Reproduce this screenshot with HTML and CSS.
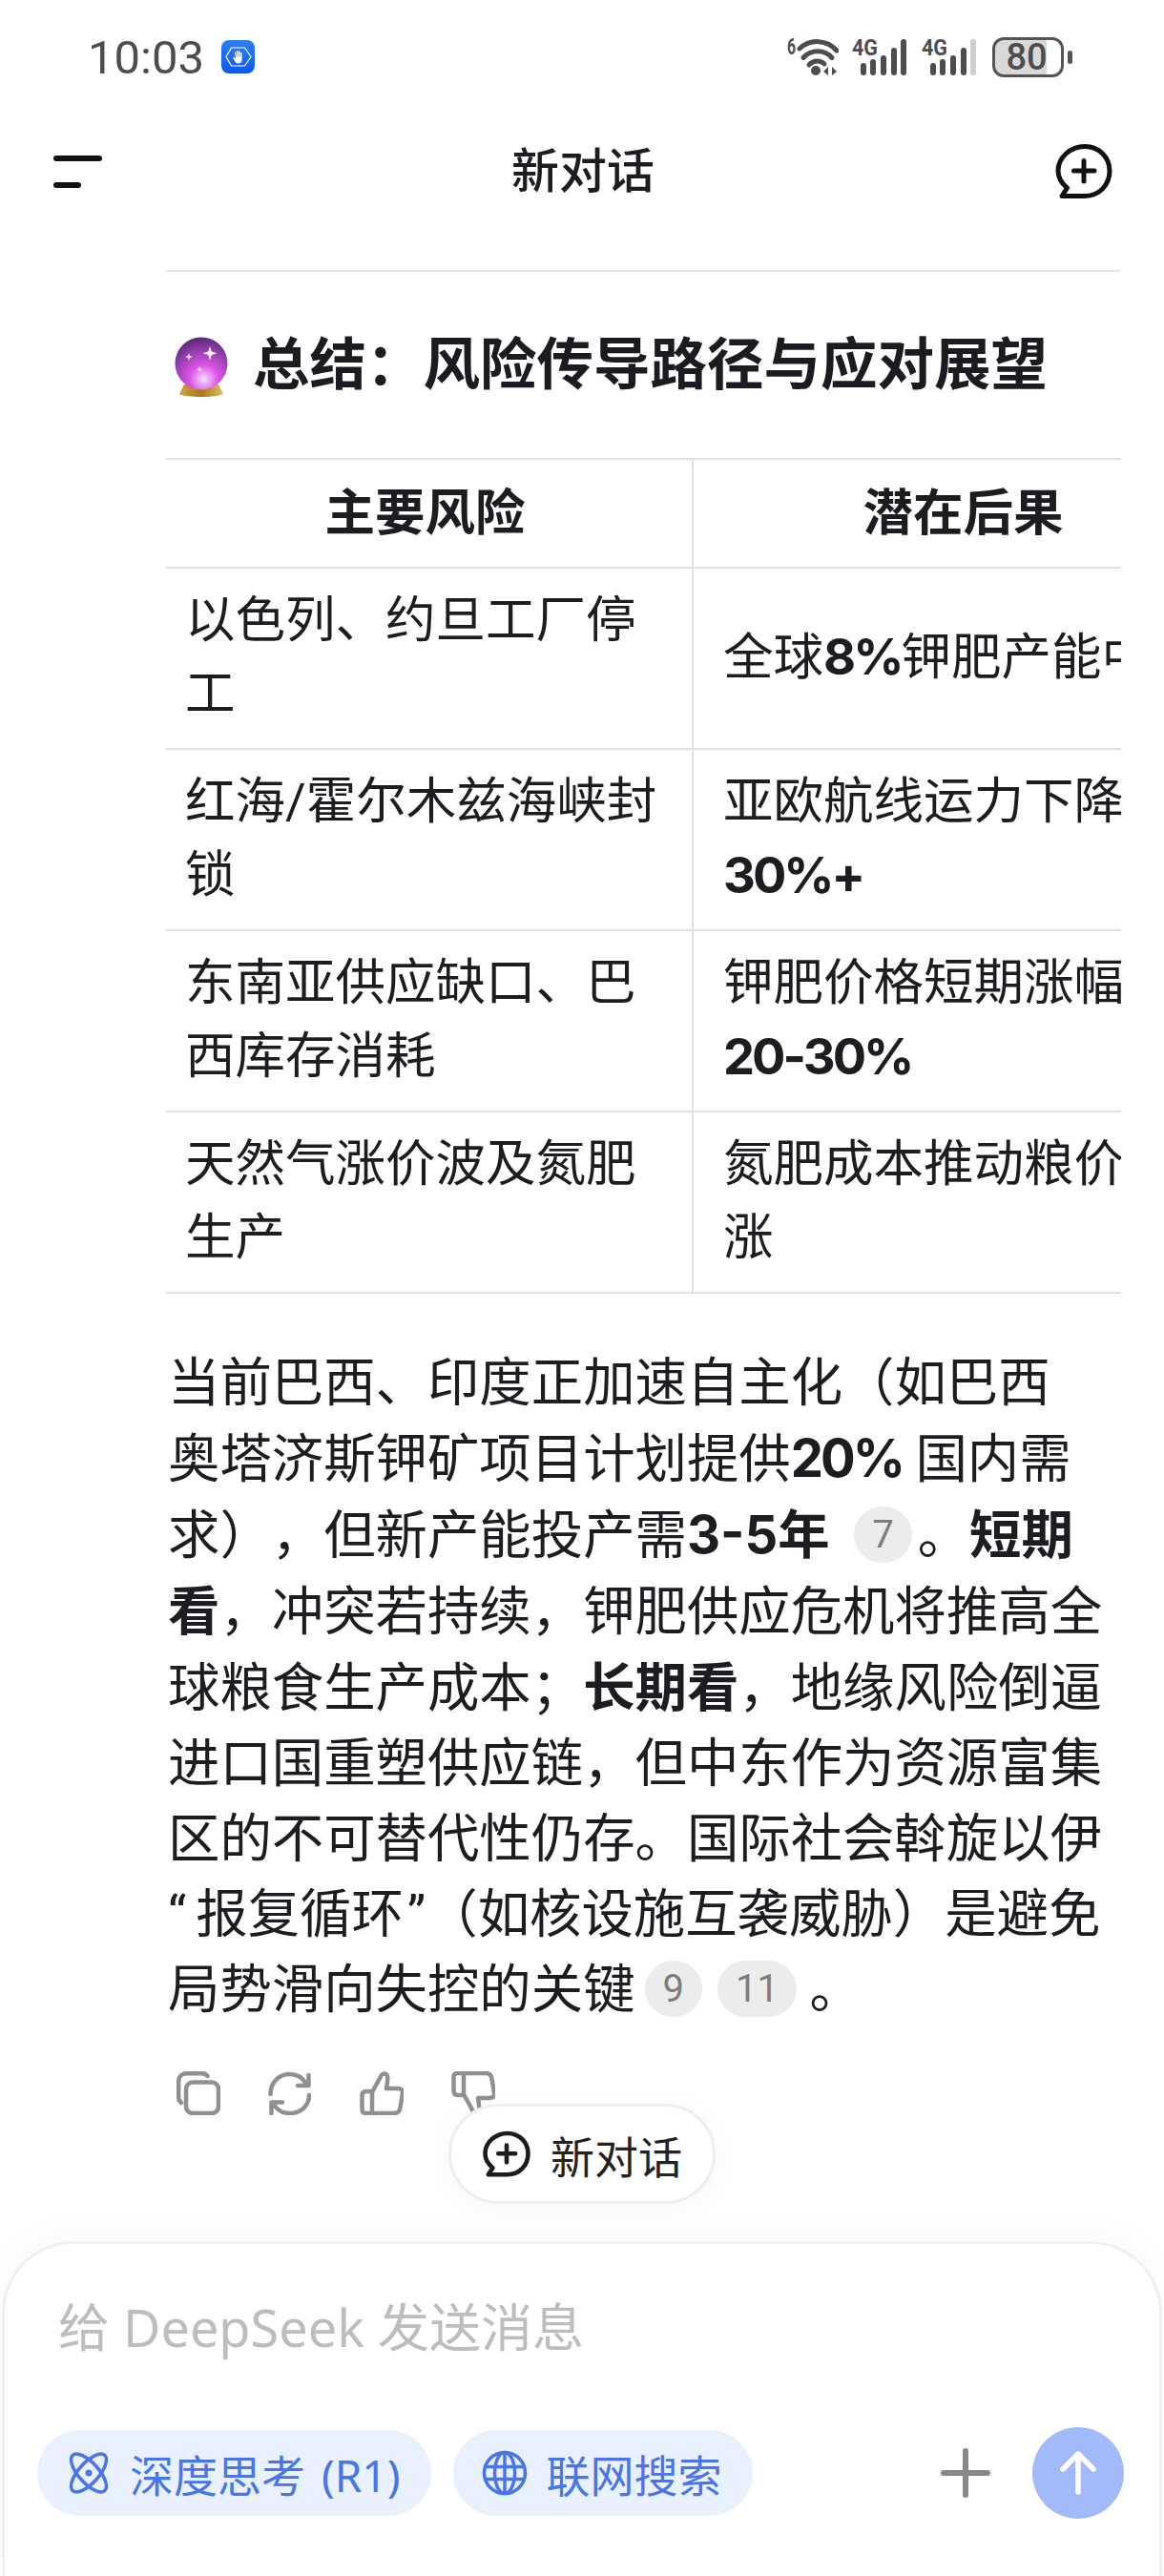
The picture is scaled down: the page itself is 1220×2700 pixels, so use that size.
FILE: index.html
```html
<!DOCTYPE html>
<html lang="zh-CN">
<head>
    <meta charset="UTF-8">
    <meta name="viewport" content="width=device-width, initial-scale=1.0">
    <title>新对话</title>
    <link rel="stylesheet" href="styles.css">
</head>
<body>
    <div class="page">
        <div class="statusbar">
            <div class="status-left">
                <span class="clock">10:03</span>
                <svg class="app-badge" viewBox="0 0 35 35">
                    <defs>
                        <linearGradient id="badgeFill" x1="0" y1="0" x2="0" y2="1">
                            <stop offset="0" stop-color="#2f7ff5"/>
                            <stop offset="1" stop-color="#0b58f2"/>
                        </linearGradient>
                    </defs>
                    <rect width="35" height="35" rx="8" fill="url(#badgeFill)"/>
                    <polygon points="10.5,8 24.5,8 31,17.5 24.5,27 10.5,27 5,17.5" fill="none" stroke="#fff" stroke-width="1.2"/>
                    <path d="M14 12.5h1.4v5h.6v-6.3h1.5v6.3h.6v-5.800h1.500v5.800h.6v-4.300h1.400v7.300c0 2.500-1.500 4-3.800 4-2 0-3-1-3.800-2.500l-2-3.500 1.200-.7 1.800 2z" fill="#fff"/>
                </svg>
            </div>
            <div class="status-right">
                <svg class="wifi" viewBox="0 -6 54 48">
                    <text x="0" y="18" class="sig-text" textLength="9" lengthAdjust="spacingAndGlyphs">6</text>
                    <g fill="none" stroke="#4d4d4d" stroke-width="5" stroke-linecap="round">
                        <path d="M13 12A27 27 0 0 1 52 14"/>
                        <path d="M17 21.500A20 20 0 0 1 47 21.500"/>
                        <path d="M23 29A11 11 0 0 1 39 28"/>
                    </g>
                    <circle cx="30" cy="35" r="5" fill="#4d4d4d"/>
                    <polygon points="38,36 43,31 43,40" fill="#4d4d4d"/>
                    <polygon points="52,36 47,31 47,40" fill="#4d4d4d"/>
                </svg>
                <svg class="signal" viewBox="0 -6 58 46">
                    <text x="0" y="18" class="sig-text" textLength="27" lengthAdjust="spacingAndGlyphs">4G</text>
                    <rect x="9" y="26" width="6" height="13" rx="3" fill="#4d4d4d"/>
                    <rect x="19" y="22" width="6" height="17" rx="3" fill="#4d4d4d"/>
                    <rect x="30" y="18" width="6" height="21" rx="3" fill="#4d4d4d"/>
                    <rect x="41" y="10" width="6" height="29" rx="3" fill="#4d4d4d"/>
                    <rect x="51" y="1" width="6" height="38" rx="3" fill="#4d4d4d"/>
                </svg>
                <svg class="signal" viewBox="0 -6 58 46">
                    <text x="0" y="18" class="sig-text" textLength="27" lengthAdjust="spacingAndGlyphs">4G</text>
                    <rect x="9" y="26" width="6" height="13" rx="3" fill="#4d4d4d"/>
                    <rect x="19" y="22" width="6" height="17" rx="3" fill="#4d4d4d"/>
                    <rect x="30" y="18" width="6" height="21" rx="3" fill="#4d4d4d"/>
                    <rect x="41" y="10" width="6" height="29" rx="3" fill="#4d4d4d"/>
                    <rect x="51" y="1" width="6" height="38" rx="3" fill="#cfcfcf"/>
                </svg>
                <div class="battery"><span>80</span></div>
                <div class="battery-nub"></div>
            </div>
        </div>

        <div class="topbar">
            <div class="menu-icon"><i></i><i class="short"></i></div>
            <div class="topbar-title">新对话</div>
            <svg class="topbar-new" viewBox="0 0 60 60">
                <path d="M31 3.500C46 3.500 57 15 57 29C57 44 46 55.500 31 55.500H7L12.500 47C6.500 42 3 36 3 29C3 15 16 3.500 31 3.500Z" fill="none" stroke="#111" stroke-width="5" stroke-linejoin="round"/>
                <path d="M30 18.500V40M19.500 29H41" fill="none" stroke="#111" stroke-width="5" stroke-linecap="round"/>
            </svg>
        </div>

        <div class="chat">
            <div class="divider"></div>
            <h2 class="section-title">
                <svg class="orb" viewBox="0 0 56 64">
                    <defs>
                        <radialGradient id="orbFill" cx="0.55" cy="0.8" r="0.85">
                            <stop offset="0" stop-color="#f8dcfc"/>
                            <stop offset="0.32" stop-color="#dc55e6"/>
                            <stop offset="0.7" stop-color="#8c3ba6"/>
                            <stop offset="1" stop-color="#4e2368"/>
                        </radialGradient>
                        <linearGradient id="orbBase" x1="0" y1="0" x2="1" y2="0">
                            <stop offset="0" stop-color="#d0a544"/>
                            <stop offset="0.5" stop-color="#a87714"/>
                            <stop offset="1" stop-color="#e0bd68"/>
                        </linearGradient>
                    </defs>
                    <path d="M10 50H46L51 60C45 64 11 64 5 60Z" fill="url(#orbBase)"/>
                    <circle cx="28" cy="28" r="27.500" fill="url(#orbFill)"/>
                    <path d="M37 10l1.800 5.500 5.500 1.800-5.500 1.800-1.800 5.500-1.800-5.500-5.500-1.800 5.500-1.800z" fill="#fff"/>
                    <path d="M15 17l1 3 3 1-3 1-1 3-1-3-3-1 3-1z" fill="#f6dcfb"/>
                    <path d="M26 31l.9 2.400 2.400.9-2.400.9-.9 2.400-.9-2.400-2.400-.9 2.400-.9z" fill="#f6dcfb"/>
                </svg>
                <span>总结：风险传导路径与应对展望</span>
            </h2>

            <div class="table-wrap">
                <table class="risk-table">
                    <colgroup>
                        <col class="col-risk">
                        <col class="col-result">
                    </colgroup>
                    <thead>
                        <tr><th>主要风险</th><th>潜在后果</th></tr>
                    </thead>
                    <tbody>
                        <tr><td>以色列、约旦工厂停工</td><td>全球<b class="num">8%</b>钾肥产能中断</td></tr>
                        <tr><td>红海/霍尔木兹海峡封锁</td><td>亚欧航线运力下降<br><b class="num">30%+</b></td></tr>
                        <tr><td>东南亚供应缺口、巴西库存消耗</td><td>钾肥价格短期涨幅<br><b class="num">20-30%</b></td></tr>
                        <tr><td>天然气涨价波及氮肥生产</td><td>氮肥成本推动粮价上<br>涨</td></tr>
                    </tbody>
                </table>
            </div>

            <p class="answer">
                当前巴西、印度正加速自主化（如巴西<br>
                奥塔济斯钾矿项目计划提供<b class="num">20%</b> 国内需<br>
                求），但新产能投产需<b>3-5年</b> <span class="cite cite-first">7</span>。<b>短期</b><br>
                <b>看</b>，冲突若持续，钾肥供应危机将推高全<br>
                球粮食生产成本；<b>长期看</b>，地缘风险倒逼<br>
                进口国重塑供应链，但中东作为资源富集<br>
                区的不可替代性仍存。国际社会斡旋以伊<br>
                <span class="quote-open">“</span>报复循环<span class="quote-close">”</span>（如核设施互袭威胁）是避免<br>
                局势滑向失控的关键<span class="cite cite-tail">9</span><span class="cite">11</span> 。
            </p>

            <div class="actions">
                <svg viewBox="0 0 46 46">
                    <rect x="10" y="11.500" width="34" height="32.500" rx="7"/>
                    <path d="M5 33C3 31.500 2.200 30 2.200 27V10.500C2.200 5.500 5.500 2.200 10.500 2.200H26C29 2.200 31 3 32.500 5"/>
                </svg>
                <svg viewBox="0 0 46 46">
                    <path d="M2.500 24C2.500 12 11 3 22.500 3C30 3 36 6.500 40 13"/>
                    <path d="M42.500 4V15H31"/>
                    <path d="M43 25C43 36 34.500 44 23 44C15.500 44 9 40.500 5.500 34"/>
                    <path d="M3.500 44V32.500H15"/>
                </svg>
                <svg viewBox="0 0 46 46">
                    <path d="M13 44V22L21 7.500C22.500 3 25 1.500 27.500 3C30 4.500 29.500 8 29 11L28 18H40C43.500 18 45.500 20 45 23L42.500 38C42 42 39.500 44 36 44H7C4 44 2.500 42.500 2.500 40V25.500C2.500 22.500 4 21 7 21H13"/>
                </svg>
                <svg viewBox="0 0 46 46">
                    <g transform="translate(0 46) scale(1 -1)">
                        <path d="M13 44V22L21 7.500C22.500 3 25 1.500 27.500 3C30 4.500 29.500 8 29 11L28 18H40C43.500 18 45.500 20 45 23L42.500 38C42 42 39.500 44 36 44H7C4 44 2.500 42.500 2.500 40V25.500C2.500 22.500 4 21 7 21H13"/>
                    </g>
                </svg>
            </div>

            <div class="new-chat-float">
                <svg viewBox="0 0 60 60">
                    <path d="M31 3.500C46 3.500 57 15 57 29C57 44 46 55.500 31 55.500H7L12.500 47C6.500 42 3 36 3 29C3 15 16 3.500 31 3.500Z" fill="none" stroke="#1c1c1c" stroke-width="5.500" stroke-linejoin="round"/>
                    <path d="M30 18.500V40M19.500 29H41" fill="none" stroke="#1c1c1c" stroke-width="5.500" stroke-linecap="round"/>
                </svg>
                <span>新对话</span>
            </div>
        </div>

        <div class="composer">
            <div class="composer-input">给 DeepSeek 发送消息</div>
            <div class="composer-tools">
                <div class="tool-pill">
                    <svg viewBox="0 0 46 44" class="tool-icon">
                        <ellipse cx="23" cy="22" rx="25" ry="10.500" transform="rotate(48 23 22)"/>
                        <ellipse cx="23" cy="22" rx="25" ry="10.500" transform="rotate(-48 23 22)"/>
                        <circle cx="23" cy="22" r="3.500" class="dot"/>
                    </svg>
                    <span class="tool-label">深度思考 (R1)</span>
                </div>
                <div class="tool-pill">
                    <svg viewBox="0 0 46 46" class="tool-icon">
                        <circle cx="23" cy="23" r="21.500"/>
                        <ellipse cx="23" cy="23" rx="10.500" ry="21.500"/>
                        <path d="M23 1.500V44.500M3.500 16.500H42.500M3.500 29.500H42.500"/>
                    </svg>
                    <span class="tool-label">联网搜索</span>
                </div>
                <svg class="plus-icon" viewBox="0 0 52 52">
                    <path d="M26 3V49M3 26H49" fill="none" stroke="#888" stroke-width="6" stroke-linecap="round"/>
                </svg>
                <div class="send-btn">
                    <svg viewBox="0 0 38 46">
                        <path d="M19 43V3M3 19L19 3L35 19" fill="none" stroke="#fff" stroke-width="5.500" stroke-linecap="round" stroke-linejoin="round"/>
                    </svg>
                </div>
            </div>
        </div>
    </div>
</body>
</html>
```

FILE: styles.css
```css
* {
    box-sizing: border-box;
}
body {
    margin: 0;
    background-color: #fff;
    font-family: Roboto, "Noto Sans CJK SC", sans-serif;
    color: #1b1d21;
    text-spacing-trim: space-all;
}
b {
    font-family: Inter, "Noto Sans CJK SC", sans-serif;
    font-weight: 700;
}
b.num {
    letter-spacing: -3px;
}
.page {
    width: 1220px;
    height: 2700px;
    display: flex;
    flex-direction: column;
    overflow: hidden;
}

/* status bar */
.statusbar {
    height: 119px;
    flex-shrink: 0;
    display: flex;
    align-items: center;
    justify-content: space-between;
    padding: 0 96px 0 92px;
}
.status-left {
    display: flex;
    align-items: center;
    gap: 18px;
}
.clock {
    font-size: 49px;
    line-height: 56px;
    color: #4d4d4d;
    margin-top: 2px;
}
.app-badge {
    width: 35px;
    height: 35px;
}
.status-right {
    display: flex;
    align-items: center;
}
.wifi {
    width: 54px;
    height: 48px;
    margin-right: 14px;
    margin-top: -6px;
}
.signal {
    width: 58px;
    height: 46px;
    margin-right: 15px;
    margin-top: -6px;
}
.sig-text {
    font-size: 24px;
    font-weight: 700;
    fill: #4d4d4d;
}
.battery {
    width: 75px;
    height: 42px;
    margin-left: 1px;
    border: 3px solid #555;
    border-radius: 12px;
    background: linear-gradient(90deg, #d9d9d9 78%, transparent 78%);
    display: flex;
    align-items: center;
    justify-content: center;
    font-size: 38px;
    font-weight: 500;
    color: #4d4d4d;
    padding-right: 3px;
}
.battery-nub {
    width: 5px;
    height: 14px;
    margin-left: 4px;
    border-radius: 3px;
    background-color: #555;
}

/* top bar */
.topbar {
    height: 118px;
    flex-shrink: 0;
    display: flex;
    align-items: center;
    justify-content: space-between;
    padding: 0 54px 0 56px;
}
.menu-icon {
    width: 60px;
    display: flex;
    flex-direction: column;
    gap: 22px;
    margin-top: 4px;
}
.menu-icon i {
    display: block;
    width: 51px;
    height: 6px;
    border-radius: 3px;
    background-color: #111;
}
.menu-icon i.short {
    width: 29px;
}
.topbar-title {
    font-size: 50px;
    line-height: 60px;
    font-weight: 500;
    margin-top: 3px;
}
.topbar-new {
    width: 60px;
    height: 60px;
    margin-top: 4px;
}

/* chat */
.chat {
    flex: 1;
    position: relative;
    padding: 46px 45px 0 174px;
}
.divider {
    height: 2px;
    background-color: #e6e6e6;
}
.section-title {
    height: 195px;
    margin: 0;
    display: flex;
    align-items: center;
    gap: 26px;
    padding: 0 0 12px 9px;
    font-size: 59.500px;
    font-weight: 700;
    color: #1a1c21;
}
.orb {
    width: 56px;
    height: 64px;
    margin-top: 16px;
}
.table-wrap {
    overflow: hidden;
}
.risk-table {
    width: 1118px;
    table-layout: fixed;
    border-collapse: collapse;
    font-size: 52.500px;
    line-height: 77px;
}
.col-risk {
    width: 552px;
}
.col-result {
    width: 566px;
}
.risk-table th,
.risk-table td {
    border: 2px solid #e0e0e0;
    border-left: none;
    border-right: none;
    vertical-align: middle;
}
.risk-table th {
    height: 114px;
    font-weight: 700;
    text-align: center;
}
.risk-table th:first-child {
    padding-right: 9px;
}
.risk-table td {
    height: 190px;
    padding: 0 20px 2px;
    text-align: left;
}
.risk-table th:first-child,
.risk-table td:first-child {
    border-right: 2px solid #e0e0e0;
}
.risk-table td:last-child {
    padding-left: 31px;
    white-space: nowrap;
}
.answer {
    margin: 54px 0 0;
    padding-left: 2px;
    font-size: 54.400px;
    line-height: 79px;
    white-space: nowrap;
}
.quote-open {
    margin-right: 10px;
}
.quote-close {
    margin-left: 4px;
}
.cite {
    display: inline-flex;
    align-items: center;
    justify-content: center;
    height: 59px;
    min-width: 58px;
    padding: 0 19px;
    margin-left: 16px;
    border-radius: 30px;
    background-color: #ececec;
    color: #7d7d7d;
    font-size: 40px;
    font-weight: 400;
    vertical-align: 6px;
    line-height: 59px;
}
.cite-first {
    margin-left: 12px;
    margin-right: 6px;
}
.cite-tail {
    margin-left: 10px;
}
.actions {
    display: flex;
    gap: 50px;
    margin-top: 46px;
    padding-left: 11px;
}
.actions svg {
    width: 46px;
    height: 46px;
    fill: none;
    stroke: #909090;
    stroke-width: 4.500;
    stroke-linecap: round;
    stroke-linejoin: round;
}
.new-chat-float {
    position: absolute;
    left: 470px;
    top: 1968px;
    width: 280px;
    height: 105px;
    display: flex;
    align-items: center;
    gap: 21px;
    padding-left: 33px;
    border: 3px solid #eeeeee;
    border-radius: 53px;
    background-color: #fff;
    box-shadow: 0 4px 24px rgba(0, 0, 0, 0.04);
    font-size: 46px;
    color: #222;
}
.new-chat-float svg {
    width: 50px;
    height: 50px;
}

/* composer */
.composer {
    height: 351px;
    flex-shrink: 0;
    position: relative;
    margin: 0 2px;
    border: 3px solid #f0f0f0;
    border-bottom: none;
    border-radius: 75px 75px 0 0;
    background-color: #fff;
    box-shadow: 0 -10px 34px rgba(0, 0, 0, 0.025);
    font-family: "Noto Sans", "Noto Sans CJK SC", sans-serif;
}
.composer-input {
    padding: 49px 0 0 56px;
    font-size: 54px;
    line-height: 76px;
    color: #bdbdbd;
}
.composer-tools {
    display: flex;
    align-items: center;
    gap: 23px;
    margin-top: 67px;
    padding: 0 37px 0 34px;
}
.tool-pill {
    height: 90px;
    display: flex;
    align-items: center;
    gap: 20px;
    padding: 0 33px 0 31px;
    border-radius: 45px;
    background-color: #e9f1fe;
    font-size: 46px;
    color: #4a74ea;
}
.tool-label {
    word-spacing: 5px;
}
.tool-icon {
    width: 46px;
    height: 46px;
    overflow: visible;
    fill: none;
    stroke: #4a74ea;
    stroke-width: 3.500;
}
.tool-icon .dot {
    fill: #4a74ea;
    stroke: none;
}
.plus-icon {
    width: 52px;
    height: 52px;
    margin-left: auto;
    margin-right: 21px;
}
.send-btn {
    width: 96px;
    height: 96px;
    display: flex;
    align-items: center;
    justify-content: center;
    border-radius: 50%;
    background-color: #a2b9fa;
}
.send-btn svg {
    width: 38px;
    height: 46px;
}
```
